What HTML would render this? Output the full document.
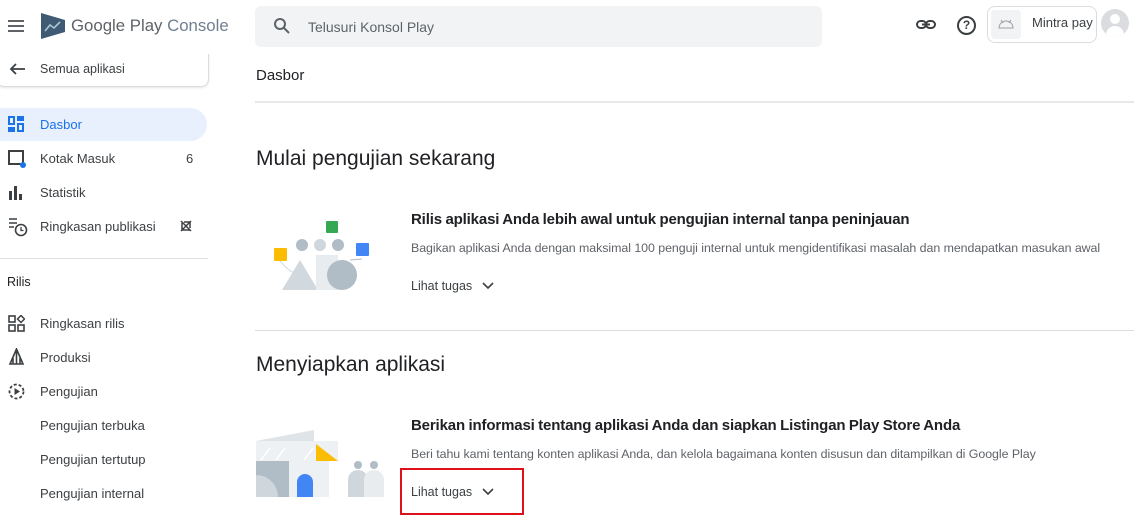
<!DOCTYPE html>
<html><head><meta charset="utf-8"><style>
*{margin:0;padding:0;box-sizing:border-box}
body{width:1134px;height:519px;overflow:hidden;background:#fff;font-family:"Liberation Sans",sans-serif;color:#202124;position:relative}
.a{position:absolute}
.nav{position:absolute;left:40px;font-size:13px;color:#3c4043;white-space:nowrap}
.ic{position:absolute;left:8px}
</style></head><body>
<!-- hamburger -->
<div class="a" style="left:8px;top:20px;width:16px;height:2px;background:#5f6368;box-shadow:0 5px 0 #5f6368,0 10px 0 #5f6368"></div>
<svg class="a" style="left:40px;top:12px" width="26" height="28"><path d="M1 1 L25 8 L25 20 L1 27 Z" fill="#3f5b73"/><path d="M5 19 L10 13 L14 16 L20 10" stroke="#a8c7d6" stroke-width="1.6" fill="none"/></svg>
<div class="a" style="left:71px;top:16px;font-size:16.8px;color:#5f6368;white-space:nowrap">Google Play <span style="color:#6f7f8f">Console</span></div>
<!-- search -->
<div class="a" style="left:255px;top:6px;width:567px;height:41px;background:#f1f3f4;border-radius:6px"></div>
<svg class="a" style="left:273px;top:17px" width="18" height="18"><circle cx="7" cy="7" r="5" stroke="#5f6368" stroke-width="2" fill="none"/><path d="M11 11 L16 16" stroke="#5f6368" stroke-width="2"/></svg>
<div class="a" style="left:308px;top:19px;font-size:14px;color:#5f6368">Telusuri Konsol Play</div>
<!-- right icons -->
<svg class="a" style="left:916px;top:18px" width="20" height="14"><rect x="1" y="3" width="9" height="7" rx="3.5" stroke="#3c4043" stroke-width="2" fill="none"/><rect x="10" y="3" width="9" height="7" rx="3.5" stroke="#3c4043" stroke-width="2" fill="none"/><path d="M6 6.5H14" stroke="#3c4043" stroke-width="2"/></svg>
<div class="a" style="left:957px;top:16px;width:19px;height:19px;border:2px solid #3c4043;border-radius:50%;font-size:12px;font-weight:bold;text-align:center;line-height:15px;color:#3c4043">?</div>
<div class="a" style="left:987px;top:6px;width:110px;height:37px;border:1px solid #dadce0;border-radius:8px"></div>
<div class="a" style="left:991px;top:10px;width:30px;height:29px;background:#f1f3f4;border-radius:4px"></div>
<svg class="a" style="left:997px;top:18px" width="18" height="12"><path d="M2 10 A7 7 0 0 1 16 10 Z" stroke="#9aa0a6" fill="none"/><path d="M4 2 L6 5 M14 2 L12 5" stroke="#9aa0a6"/></svg>
<div class="a" style="left:1032px;top:15px;font-size:13px;color:#3c4043">Mintra pay</div>
<div class="a" style="left:1101px;top:9px;width:28px;height:28px;border-radius:50%;background:#dadce0;overflow:hidden"><div class="a" style="left:9px;top:5px;width:10px;height:10px;border-radius:50%;background:#fff"></div><div class="a" style="left:5px;top:17px;width:18px;height:14px;border-radius:9px 9px 0 0;background:#fff"></div></div>
<!-- sidebar -->
<div class="a" style="left:-4px;top:54px;width:213px;height:33px;border:1px solid #dadce0;border-top:none;border-radius:0 0 8px 8px;box-shadow:0 1px 2px rgba(0,0,0,.1)"></div>
<svg class="a" style="left:9px;top:63px" width="17" height="12"><path d="M16 6H2M7 1L2 6L7 11" stroke="#3c4043" stroke-width="1.8" fill="none"/></svg>
<div class="nav" style="top:62px;font-size:12.5px">Semua aplikasi</div>
<div class="a" style="left:0;top:108px;width:207px;height:33px;background:#e8f0fe;border-radius:0 17px 17px 0"></div>
<svg class="ic" style="top:116px" width="17" height="17" fill="#1a73e8"><rect x="0" y="0" width="7" height="9"/><rect x="2" y="2" width="3" height="5" fill="#e8f0fe"/><rect x="9" y="0" width="7" height="5"/><rect x="9" y="7" width="7" height="9"/><rect x="11" y="9" width="3" height="5" fill="#e8f0fe"/><rect x="0" y="11" width="7" height="5"/></svg>
<div class="nav" style="top:117px;color:#1a73e8">Dasbor</div>
<svg class="ic" style="top:150px" width="18" height="18"><rect x="1" y="1" width="14" height="13" stroke="#3c4043" stroke-width="2" fill="none"/><circle cx="15" cy="15" r="3" fill="#1a73e8"/></svg>
<div class="nav" style="top:151px">Kotak Masuk</div><div class="a" style="left:186px;top:151px;font-size:13px;color:#3c4043">6</div>
<svg class="ic" style="top:185px" width="16" height="15" fill="#3c4043"><rect x="1" y="6" width="3" height="9"/><rect x="6" y="1" width="3" height="14"/><rect x="11" y="9" width="3" height="6"/></svg>
<div class="nav" style="top:185px">Statistik</div>
<svg class="ic" style="top:217px" width="20" height="20"><path d="M1 2H9M1 6H9M1 10H6" stroke="#3c4043" stroke-width="1.5"/><circle cx="13" cy="13" r="5.5" stroke="#3c4043" stroke-width="1.6" fill="none"/><path d="M13 10V13.5H15.5" stroke="#3c4043" stroke-width="1.3" fill="none"/></svg>
<div class="nav" style="top:219px">Ringkasan publikasi</div>
<svg class="a" style="left:179px;top:219px" width="14" height="14"><path d="M2 2L12 12M12 2L2 12M3 4L3 11L11 11M5 3L11 3L11 9" stroke="#3c4043" stroke-width="1.5" fill="none"/></svg>
<div class="a" style="left:0;top:258px;width:208px;height:1px;background:#e0e0e0"></div>
<div class="a" style="left:7px;top:275px;font-size:12.5px;color:#202124">Rilis</div>
<svg class="ic" style="top:315px" width="17" height="17"><rect x="1" y="1" width="6" height="6" stroke="#3c4043" stroke-width="1.6" fill="none"/><rect x="1" y="10" width="6" height="6" stroke="#3c4043" stroke-width="1.6" fill="none"/><rect x="10" y="10" width="6" height="6" stroke="#3c4043" stroke-width="1.6" fill="none"/><path d="M13 0.5L16.5 4L13 7.5L9.5 4Z" stroke="#3c4043" stroke-width="1.5" fill="none"/></svg>
<div class="nav" style="top:316px">Ringkasan rilis</div>
<svg class="ic" style="top:348px" width="17" height="18"><path d="M8.5 1L2 16H15Z M8.5 1V16 M5 10L5 16 M12 10L12 16" stroke="#3c4043" stroke-width="1.6" fill="none"/></svg>
<div class="nav" style="top:350px">Produksi</div>
<svg class="ic" style="top:383px" width="17" height="17"><circle cx="8.5" cy="8.5" r="7" stroke="#3c4043" stroke-width="1.8" fill="none" stroke-dasharray="3 2"/><path d="M6.5 5L12 8.5L6.5 12Z" fill="#3c4043"/></svg>
<div class="nav" style="top:384px">Pengujian</div>
<div class="nav" style="top:418px">Pengujian terbuka</div>
<div class="nav" style="top:452px">Pengujian tertutup</div>
<div class="nav" style="top:486px">Pengujian internal</div>
<!-- main -->
<div class="a" style="left:256px;top:67px;font-size:15px;color:#202124">Dasbor</div>
<div class="a" style="left:255px;top:101px;width:879px;height:2px;background:#e8e8e8"></div>
<div class="a" style="left:256px;top:147px;font-size:21px;color:#202124">Mulai pengujian sekarang</div>
<svg class="a" style="left:270px;top:215px" width="105" height="80">
<rect x="56" y="6" width="12" height="12" rx="1" fill="#34a853"/>
<circle cx="32" cy="30" r="6" fill="#b0bcc6"/><circle cx="50" cy="30" r="6" fill="#cfd6dc"/><circle cx="68" cy="30" r="6" fill="#b0bcc6"/>
<rect x="4" y="33" width="13" height="13" rx="1" fill="#fbbc04"/><rect x="86" y="28" width="13" height="13" rx="1" fill="#4285f4"/>
<path d="M10 46 Q18 56 28 60" stroke="#cfd6dc" fill="none"/>
<path d="M12 75L30 45L48 75Z" fill="#d1d8de"/><rect x="46" y="40" width="22" height="35" fill="#e8ecef"/>
<circle cx="72" cy="60" r="15" fill="#b0bcc6"/><path d="M80 45 L92 44" stroke="#b0bcc6"/>
</svg>
<div class="a" style="left:411px;top:211px;font-size:15px;font-weight:bold;color:#202124;letter-spacing:-.15px;word-spacing:-.5px">Rilis aplikasi Anda lebih awal untuk pengujian internal tanpa peninjauan</div>
<div class="a" style="left:411px;top:241px;font-size:12.4px;color:#5f6368;letter-spacing:-.05px">Bagikan aplikasi Anda dengan maksimal 100 penguji internal untuk mengidentifikasi masalah dan mendapatkan masukan awal</div>
<div class="a" style="left:411px;top:279px;font-size:12.5px;color:#3c4043">Lihat tugas</div>
<svg class="a" style="left:482px;top:282px" width="12" height="8"><path d="M1 1L6 6L11 1" stroke="#3c4043" stroke-width="1.6" fill="none"/></svg>
<div class="a" style="left:255px;top:330px;width:879px;height:1px;background:#dadce0"></div>
<div class="a" style="left:256px;top:353px;font-size:21px;color:#202124">Menyiapkan aplikasi</div>
<svg class="a" style="left:256px;top:430px" width="130" height="67">
<path d="M0 11L58 0V66H0Z" fill="#dfe4e8"/><rect x="0" y="11" width="82" height="20" fill="#eef1f3"/>
<path d="M5 30L14 18M20 30L29 18M48 30L57 18" stroke="#fff" stroke-width="1.5"/>
<path d="M60 31L82 31L60 14Z" fill="#fbbc04"/>
<rect x="0" y="31" width="33" height="36" fill="#b0bcc6"/><path d="M0 45 A22 22 0 0 1 22 67H0Z" fill="#cfd6dc"/>
<rect x="33" y="31" width="40" height="36" fill="#eef1f3"/><path d="M41 67V52 A8 8 0 0 1 57 52V67Z" fill="#4285f4"/>
<circle cx="102" cy="35" r="4" fill="#b0bcc6"/><circle cx="118" cy="35" r="4" fill="#b0bcc6"/>
<path d="M92 67V50 A10 10 0 0 1 112 50V67Z" fill="#cfd6dc"/><path d="M108 67V50 A10 10 0 0 1 128 50V67Z" fill="#e8ecef"/>
</svg>
<div class="a" style="left:411px;top:417px;font-size:15px;font-weight:bold;color:#202124;letter-spacing:-.15px;word-spacing:-.5px">Berikan informasi tentang aplikasi Anda dan siapkan Listingan Play Store Anda</div>
<div class="a" style="left:411px;top:447px;font-size:12.4px;color:#5f6368;letter-spacing:-.05px">Beri tahu kami tentang konten aplikasi Anda, dan kelola bagaimana konten disusun dan ditampilkan di Google Play</div>
<div class="a" style="left:411px;top:485px;font-size:12.5px;color:#3c4043">Lihat tugas</div>
<svg class="a" style="left:482px;top:488px" width="12" height="8"><path d="M1 1L6 6L11 1" stroke="#3c4043" stroke-width="1.6" fill="none"/></svg>
<div class="a" style="left:400px;top:468px;width:124px;height:47px;border:2px solid #e0101a"></div>
</body></html>
